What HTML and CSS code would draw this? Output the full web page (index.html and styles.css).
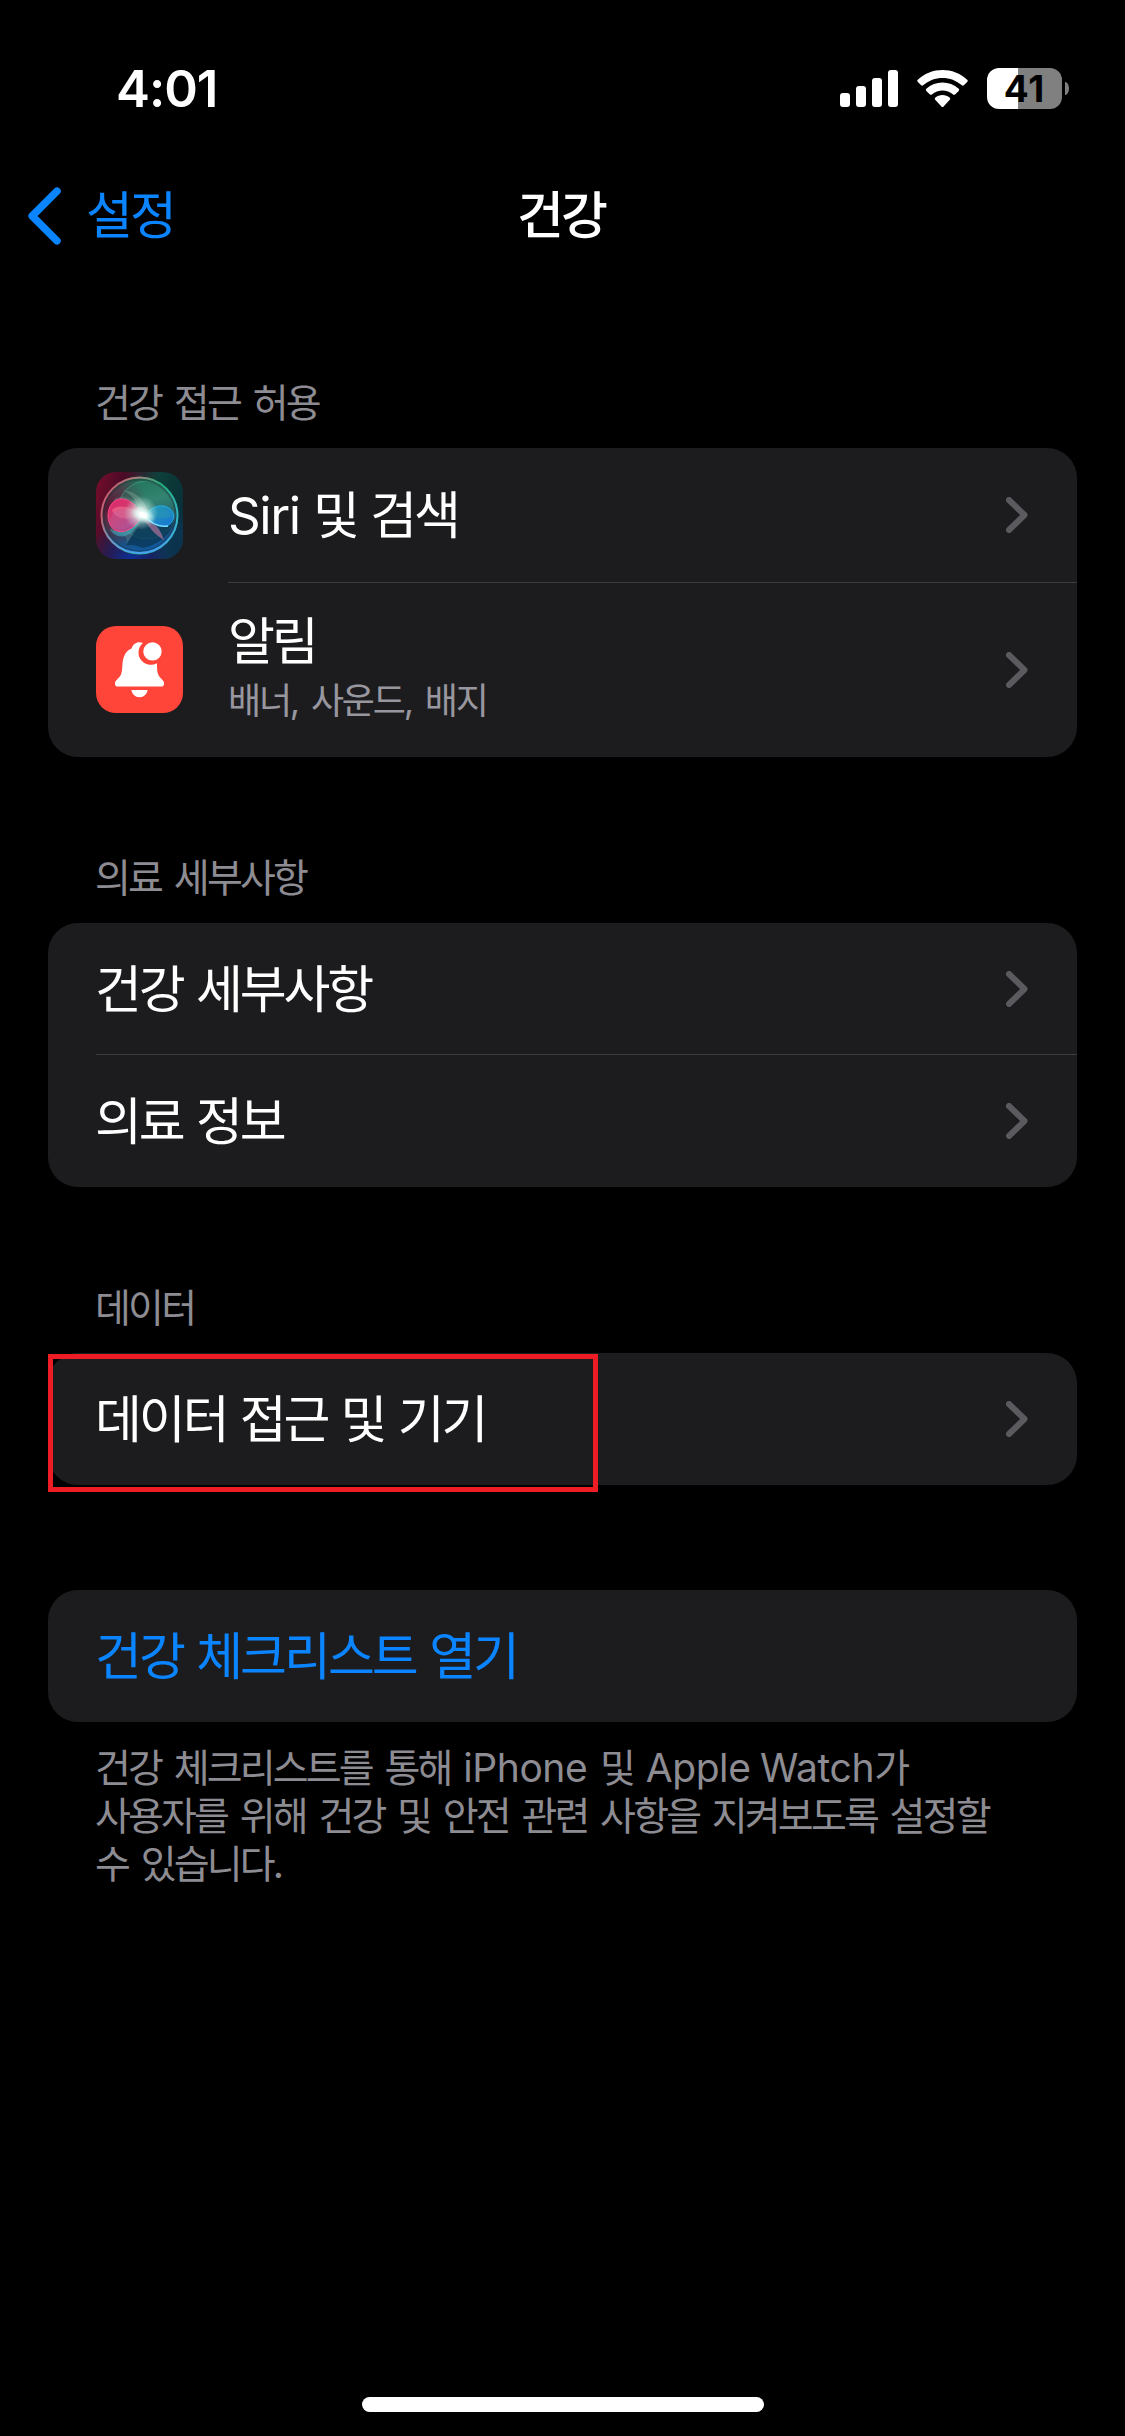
FILE: index.html
```html
<!DOCTYPE html>
<html lang="ko">
<head>
<meta charset="utf-8">
<title>건강</title>
<link rel="stylesheet" href="styles.css">
</head>
<body>
<div class="screen">
  <header class="status">
    <span class="time">4:01</span>
    <div class="indicators">
      <svg class="signal" width="58" height="38" viewBox="0 0 58 38" fill="#fff">
        <rect x="0" y="23" width="10" height="14" rx="3"/>
        <rect x="16" y="16" width="10" height="21" rx="3"/>
        <rect x="32" y="8" width="10" height="29" rx="3"/>
        <rect x="48" y="0" width="10" height="37" rx="3"/>
      </svg>
      <svg class="wifi" width="51" height="38" viewBox="0 0 51 38" fill="#fff">
        <path d="M.8 9.700Q-.3 10.800.8 11.900L4.200 15.300Q5.100 16.100 6.100 15.300C17 5.400 34 5.400 44.900 15.300Q45.900 16.100 46.800 15.300L50.200 11.900Q51.300 10.800 50.200 9.700C36.500-3.200 14.500-3.200.8 9.700Z"/>
        <path d="M9.300 18.800Q8.300 19.900 9.300 20.900L12.900 24.400Q13.900 25.300 14.900 24.400C21 19.100 30 19.100 36.100 24.400Q37.100 25.300 38.100 24.400L41.700 20.900Q42.700 19.900 41.700 18.800C32.600 10.500 18.400 10.500 9.300 18.800Z"/>
        <path d="M18.200 27.700Q17.200 28.700 18.200 29.700L24.400 36.500Q25.500 37.600 26.600 36.500L32.800 29.700Q33.800 28.700 32.800 27.700C28.700 24.100 22.300 24.100 18.200 27.700Z"/>
      </svg>
      <div class="battery">
        <div class="battery-body">41</div>
        <div class="battery-tip"></div>
      </div>
    </div>
  </header>

  <nav class="navbar">
    <a class="back">
      <svg width="34" height="58" viewBox="0 0 34 58" fill="none" stroke="#0a84ff" stroke-width="7.500" stroke-linecap="round" stroke-linejoin="round"><path d="M30 4.200L5.200 29L30 53.800"/></svg>
      <span>설정</span>
    </a>
    <h1 class="title">건강</h1>
  </nav>

  <main class="content">
    <section>
      <h2 class="caption">건강 접근 허용</h2>
      <div class="card">
        <div class="row row-siri">
          <svg class="app-icon" viewBox="0 0 87 87">
            <defs>
              <clipPath id="tile"><rect width="87" height="87" rx="20"/></clipPath>
              <clipPath id="orb"><circle cx="43.500" cy="43.500" r="36"/></clipPath>
              <linearGradient id="edge" x1="0" y1=".2" x2="1" y2=".5"><stop offset="0" stop-color="#700d2b"/><stop offset=".25" stop-color="#4b0b27"/><stop offset=".6" stop-color="#0e4039"/><stop offset="1" stop-color="#082e36"/></linearGradient>
              <radialGradient id="indigo" cx=".4" cy="1.020" r=".5"><stop offset="0" stop-color="#0c2f9c"/><stop offset=".5" stop-color="#1d1b69" stop-opacity=".7"/><stop offset="1" stop-color="#123a68" stop-opacity="0"/></radialGradient>
              <radialGradient id="navy" cx="1" cy="1" r=".65"><stop offset="0" stop-color="#0c314b"/><stop offset=".5" stop-color="#0b3552" stop-opacity=".9"/><stop offset="1" stop-color="#0b3552" stop-opacity="0"/></radialGradient>
              <linearGradient id="depth" x1=".35" y1="0" x2=".6" y2="1"><stop offset="0" stop-color="#20674f"/><stop offset=".35" stop-color="#3c8175"/><stop offset=".65" stop-color="#25496b"/><stop offset="1" stop-color="#0d5ba5"/></linearGradient>
              <radialGradient id="wine" cx=".12" cy=".4" r=".5"><stop offset="0" stop-color="#5f1030"/><stop offset=".5" stop-color="#582740" stop-opacity=".75"/><stop offset="1" stop-color="#582740" stop-opacity="0"/></radialGradient>
              <linearGradient id="ring" x1="0" y1=".3" x2="1" y2=".7"><stop offset="0" stop-color="#c65b70"/><stop offset=".32" stop-color="#a1857c"/><stop offset=".6" stop-color="#20af79"/><stop offset="1" stop-color="#35b9cf"/></linearGradient>
              <linearGradient id="ring-low" x1="0" y1="0" x2="0" y2="1"><stop offset=".55" stop-color="#409eed" stop-opacity="0"/><stop offset="1" stop-color="#49a1f2"/></linearGradient>
              <linearGradient id="pink" x1="0" y1="0" x2=".7" y2="1"><stop offset="0" stop-color="#e02668"/><stop offset=".5" stop-color="#cf3c70"/><stop offset="1" stop-color="#a64b94"/></linearGradient>
              <linearGradient id="blue" x1="0" y1="0" x2="1" y2="1"><stop offset="0" stop-color="#2aa4ae"/><stop offset="1" stop-color="#1671d5"/></linearGradient>
              <radialGradient id="glow"><stop offset="0" stop-color="#fff"/><stop offset=".27" stop-color="#fff"/><stop offset=".45" stop-color="#e4fff7" stop-opacity=".75"/><stop offset="1" stop-color="#bdf4e5" stop-opacity="0"/></radialGradient>
            </defs>
            <g clip-path="url(#tile)">
              <rect width="87" height="87" fill="url(#edge)"/>
              <rect width="87" height="87" fill="url(#navy)"/>
              <rect width="87" height="87" fill="url(#indigo)"/>
              <circle cx="43.500" cy="43.500" r="38" fill="url(#depth)"/>
              <circle cx="43.500" cy="43.500" r="38" fill="url(#wine)"/>
              <g clip-path="url(#orb)">
                <circle cx="51" cy="38" r="29" fill="#22896a" fill-opacity=".35" stroke="#4bb891" stroke-opacity=".5"/>
                <path d="M46 44C62 49 72 51 78 46C77 62 62 73 47 76C35 71 29 74 30 73Z" fill="#0a3656" fill-opacity=".75"/>
                <path d="M18 27C32 20 42 29 50 44L30 73C34 62 23 63 15 58Z" fill="#669c98" fill-opacity=".3"/>
                <path d="M45 42C41 29 35 22 27 18C42 20 51 30 52 44Z" fill="#b3d6bd" fill-opacity=".25"/>
                <path d="M46 43C38 68 20 69 14 57C27 65 36 52 46 43Z" fill="#3ea8bc" fill-opacity=".65"/>
                <path d="M46 43C32 18 12 25 12 44C13 65 35 65 46 43Z" fill="url(#pink)" stroke="#fa4c89" stroke-width="1"/>
                <path d="M46 43C31 31 19 34 16 38C18 47 33 49 46 43Z" fill="#ef6d91" fill-opacity=".65"/>
                <path d="M17 41C29 34 37 37 46 43C32 63 17 60 13 50Z" fill="#b764a0" fill-opacity=".35"/>
                <path d="M46 44C57 47 65 58 68 68C57 62 51 52 46 44Z" fill="#986a91" fill-opacity=".8"/>
                <path d="M48 44C60 28 76 33 78 44C75 58 62 58 48 44Z" fill="url(#blue)" stroke="#26afe1" stroke-width="1"/>
                <path d="M48 43C62 48 72 46 77 44C72 36 60 35 48 43Z" fill="#2695b4" fill-opacity=".6"/>
                <path d="M47 43Q59 56 72 54" fill="none" stroke="#7bdcff" stroke-width="1.500"/>
              </g>
              <circle cx="45" cy="41" r="17" fill="url(#glow)" opacity=".75"/>
              <ellipse cx="47" cy="43" rx="13" ry="8" fill="url(#glow)" transform="rotate(25 47 43)"/>
              <circle cx="43.500" cy="43.500" r="36" fill="none" stroke="#142c31" stroke-opacity=".35" stroke-width="2"/>
              <circle cx="43.500" cy="43.500" r="38" fill="none" stroke="url(#ring)" stroke-width="2"/>
              <circle cx="43.500" cy="43.500" r="37.500" fill="none" stroke="url(#ring-low)" stroke-width="2"/>
            </g>
          </svg>
          <div class="label"><span class="latin">Siri</span> 및 검색</div>
          <svg class="chevron" viewBox="0 0 22 36"><path d="M3 3L18.500 18L3 33"/></svg>
        </div>
        <div class="row row-alerts">
          <svg class="app-icon" viewBox="0 0 87 87">
            <rect width="87" height="87" rx="20" fill="#ff453a"/>
            <path d="M22 60.600C19.600 60.600 18.800 58.800 19 56.900C19.300 54 23.500 52.300 25 48.500C27.200 42.700 25.500 37 28 30.500C29.500 26.500 32 23.900 35.600 22.500C36.500 18.500 40 16.200 43.500 16.200C44.800 16.200 45.800 16.500 46.900 17.100A12.300 12.300 0 0 0 60.900 37.200C61.100 41.400 60.900 45.200 62.200 48.500C63.700 52.300 67.700 54 68.100 56.900C68.300 58.900 67.400 60.600 65.100 60.600Z" fill="#fff"/>
            <path d="M35.500 64H51.500C51.300 68 47.800 71.200 43.500 71.200S35.700 68 35.500 64Z" fill="#fff"/>
            <circle cx="56.500" cy="25.400" r="9.200" fill="#fff"/>
          </svg>
          <div class="stack">
            <div class="label">알림</div>
            <div class="detail">배너, 사운드, 배지</div>
          </div>
          <svg class="chevron" viewBox="0 0 22 36"><path d="M3 3L18.500 18L3 33"/></svg>
        </div>
      </div>
    </section>

    <section>
      <h2 class="caption">의료 세부사항</h2>
      <div class="card">
        <div class="row divided">
          <div class="label">건강 세부사항</div>
          <svg class="chevron" viewBox="0 0 22 36"><path d="M3 3L18.500 18L3 33"/></svg>
        </div>
        <div class="row">
          <div class="label">의료 정보</div>
          <svg class="chevron" viewBox="0 0 22 36"><path d="M3 3L18.500 18L3 33"/></svg>
        </div>
      </div>
    </section>

    <section>
      <h2 class="caption">데이터</h2>
      <div class="card">
        <div class="row">
          <div class="label">데이터 접근 및 기기</div>
          <svg class="chevron" viewBox="0 0 22 36"><path d="M3 3L18.500 18L3 33"/></svg>
        </div>
        <div class="highlight"></div>
      </div>
    </section>

    <section>
      <div class="card">
        <div class="row"><div class="label link">건강 체크리스트 열기</div></div>
      </div>
      <p class="footnote">건강 체크리스트를 통해 <span class="latin">iPhone</span> 및 <span class="latin">Apple Watch</span>가<br>사용자를 위해 건강 및 안전 관련 사항을 지켜보도록 설정할<br>수 있습니다.</p>
    </section>
  </main>

  <div class="home-indicator"></div>
</div>
</body>
</html>
```
FILE: styles.css
```css
* { box-sizing: border-box; }

body {
  margin: 0;
  background: #000;
  color: #fff;
  font-family: Inter, "Noto Sans CJK KR", sans-serif;
}

svg { display: block; flex: none; }

.screen {
  display: flex;
  flex-direction: column;
  width: 1125px;
  height: 2436px;
  background: #000;
}

.status {
  display: flex;
  justify-content: space-between;
  height: 150px;
  padding: 58px 56px 0 116px;
}

.time {
  font-size: 51px;
  font-weight: 600;
  line-height: 61px;
  letter-spacing: -1px;
}

.indicators { display: flex; align-items: flex-start; }
.signal { margin: 12px 19px 0 0; }
.wifi { margin: 12px 19px 0 0; }
.battery { display: flex; align-items: center; gap: 3px; margin-top: 10px; }

.battery-body {
  width: 75px;
  height: 41px;
  border-radius: 12px;
  background: linear-gradient(90deg, #fff 31px, #808080 31px);
  color: #000;
  font-size: 37px;
  font-weight: 650;
  line-height: 42px;
  letter-spacing: 1px;
  text-align: center;
}

.battery-tip {
  width: 4px;
  height: 13px;
  border-radius: 0 4px 4px 0 / 0 7px 7px 0;
  background: #808080;
}

.navbar {
  display: grid;
  grid-template-columns: 1fr auto 1fr;
  align-items: center;
  height: 132px;
  padding: 0 30px 0 27px;
}

.back {
  display: flex;
  align-items: center;
  gap: 25px;
  color: #0a84ff;
  font-size: 51px;
  line-height: 60px;
  letter-spacing: -3px;
}

.title {
  margin: 0;
  font-size: 51px;
  font-weight: 500;
  line-height: 60px;
  letter-spacing: -3px;
}

.content {
  display: flex;
  flex-direction: column;
  flex: 1;
  padding: 0 48px;
}

.caption {
  height: 48px;
  margin: 97px 48px 21px 47px;
  color: #8d8c93;
  font-size: 39px;
  font-weight: 400;
  line-height: 48px;
  letter-spacing: -2.8px;
  word-spacing: 4.5px;
}

.card {
  position: relative;
  border-radius: 30px;
  background: #1c1c1e;
}

.row {
  position: relative;
  display: flex;
  align-items: center;
  justify-content: space-between;
  height: 132px;
  padding: 0 49px 0 47px;
}

.row-siri { height: 135px; padding-bottom: 1px; padding-left: 48px; }
.row-alerts { height: 174px; padding-bottom: 1px; padding-left: 48px; }

.row-siri::after,
.divided::after {
  content: "";
  position: absolute;
  right: 0;
  bottom: 0;
  left: 48px;
  height: 1px;
  background: #3d3d40;
}

.row-siri::after { left: 180px; }

.app-icon { width: 87px; height: 87px; margin-right: 45px; }
.app-icon + * { flex: 1; }

.label {
  padding-top: 1px;
  font-size: 51px;
  line-height: 60px;
  letter-spacing: -3.1px;
  word-spacing: 2px;
}

.detail {
  color: #98979f;
  font-size: 36px;
  line-height: 45px;
  letter-spacing: -2.2px;
  word-spacing: 5px;
}

.stack { display: flex; flex-direction: column; gap: 7px; padding-bottom: 4px; }
.label .latin { letter-spacing: -1.4px; }
.footnote .latin { letter-spacing: -.4px; word-spacing: -1px; }
.link { color: #0a84ff; letter-spacing: -3px; }

.chevron {
  width: 22px;
  height: 36px;
  fill: none;
  stroke: #5a5a5f;
  stroke-width: 6;
  stroke-linecap: round;
  stroke-linejoin: round;
}

.highlight {
  position: absolute;
  top: 1px;
  left: 0;
  width: 550px;
  height: 138px;
  border: 5px solid #ee1c25;
}

section:last-child { margin-top: 105px; }

.footnote {
  margin: 22px 47px 0;
  color: #8d8c93;
  font-size: 39px;
  line-height: 48px;
  letter-spacing: -2.85px;
  word-spacing: 4.5px;
  white-space: nowrap;
}

.home-indicator {
  align-self: center;
  width: 402px;
  height: 15px;
  margin-bottom: 24px;
  border-radius: 8px;
  background: #fff;
}
```
